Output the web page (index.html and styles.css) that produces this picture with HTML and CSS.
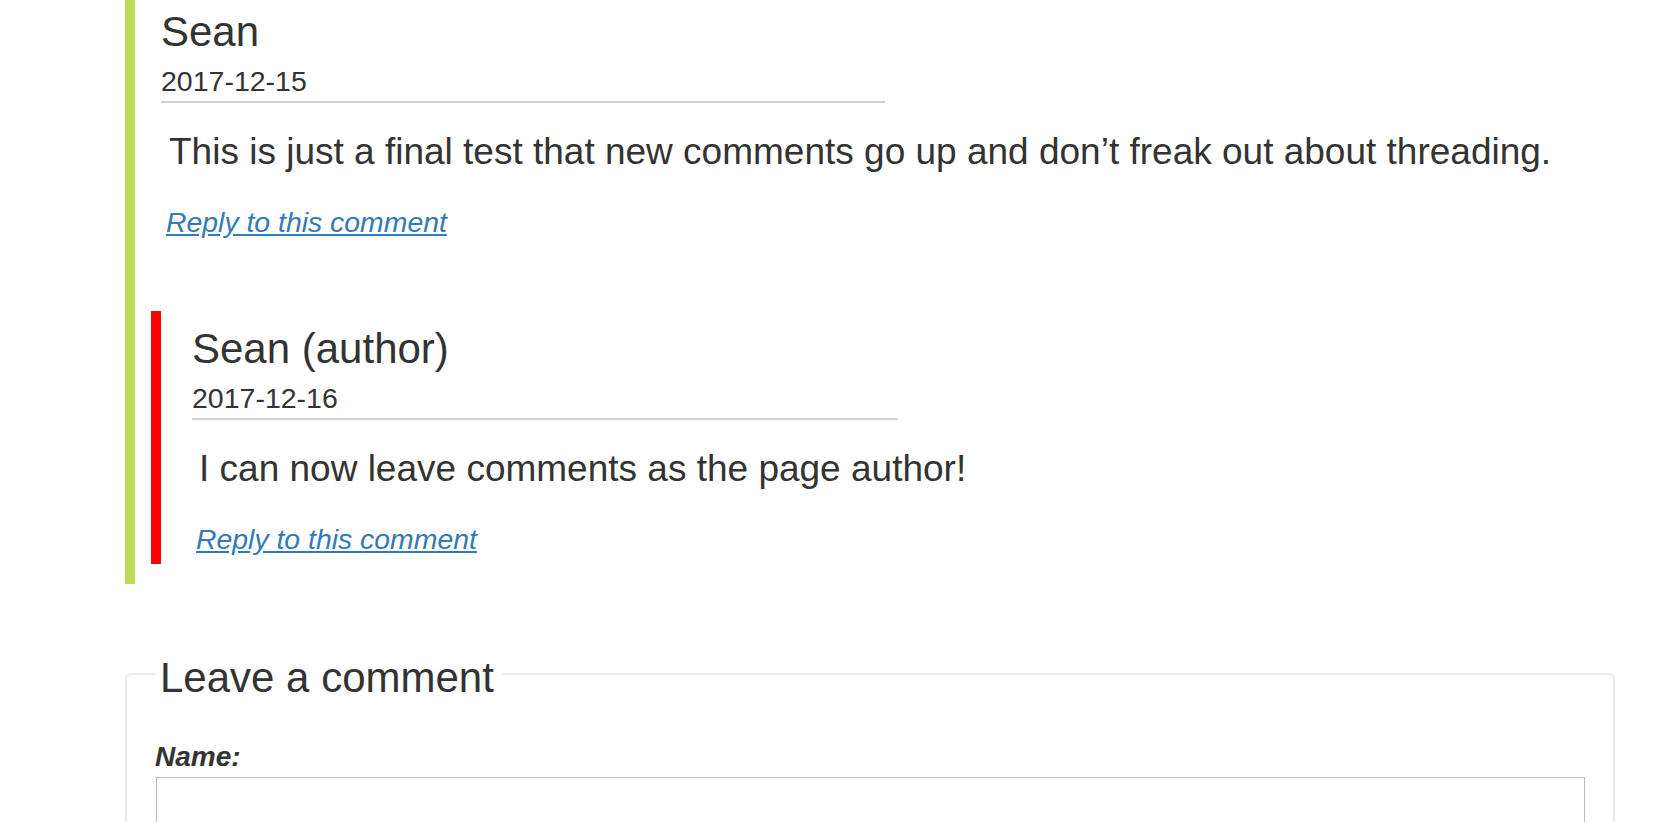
FILE: index.html
```html
<!DOCTYPE html>
<html lang="en">
<head>
<meta charset="utf-8">
<title>Comments</title>
<link rel="stylesheet" href="styles.css">
</head>
<body>
<div class="page">
  <div class="comment comment--root">
    <div class="comment-main">
      <div class="comment-head">
        <div class="comment-name">Sean</div>
        <div class="comment-date">2017-12-15</div>
      </div>
      <p class="comment-text">This is just a final test that new comments go up and don’t freak out about threading.</p>
      <a class="comment-reply" href="#">Reply to this comment</a>
    </div>
    <div class="replies">
      <div class="comment comment--author">
        <div class="comment-main">
          <div class="comment-head">
            <div class="comment-name">Sean (author)</div>
            <div class="comment-date">2017-12-16</div>
          </div>
          <p class="comment-text">I can now leave comments as the page author!</p>
          <a class="comment-reply" href="#">Reply to this comment</a>
        </div>
      </div>
    </div>
  </div>

  <form class="comment-form">
    <fieldset class="form-fieldset">
      <legend class="form-legend">Leave a comment</legend>
      <label class="form-label" for="name">Name:</label>
      <input class="form-input" id="name" type="text">
    </fieldset>
  </form>
</div>
</body>
</html>
```

FILE: styles.css
```css
html, body {
  margin: 0;
  padding: 0;
  background: #ffffff;
}

body {
  font-family: "Liberation Sans", Arial, Helvetica, sans-serif;
  color: #333333;
  overflow: hidden;
}

.page {
  padding-left: 125px;
  width: 1490px;
}

.comment {
  border-left: 10px solid #bfdc57;
  padding-left: 16px;
}

.comment--root {
  padding-top: 2px;
  padding-bottom: 20px;
}

.comment--author {
  border-left-color: #ff0000;
  padding-top: 8px;
  padding-bottom: 9px;
}

.comment-main {
  padding-left: 10px;
}

.comment--author .comment-main {
  padding-left: 15px;
}

.comment-head {
  width: 724px;
  border-bottom: 2px solid #d3d3d3;
}

.comment--author .comment-head {
  width: 706px;
}

.comment-name {
  font-size: 42px;
  line-height: 60px;
}

.comment-date {
  font-size: 28.5px;
  line-height: 39px;
}

.comment-text {
  margin: 27px 0 0 8px;
  font-size: 37px;
  line-height: 44px;
}

.comment--author .comment-text {
  margin-left: 7px;
}

.comment-reply {
  display: inline-block;
  margin: 32px 0 0 5px;
  font-size: 28.4px;
  line-height: 32px;
  font-style: italic;
  color: #337ab7;
  text-decoration: underline;
}

.comment--author .comment-reply {
  margin-left: 4px;
}

.replies {
  margin-top: 73px;
}

.comment-form {
  margin-top: 63px;
}

.form-fieldset {
  margin: 0;
  padding: 40px 28px 0 28px;
  border: 2px solid #e6ebf5;
  border-radius: 6px;
  min-width: 0;
}

.form-legend {
  font-size: 42px;
  line-height: 46px;
  padding: 8px 8px 0 5px;
}

.form-label {
  display: block;
  font-size: 28px;
  line-height: 32px;
  font-weight: bold;
  font-style: italic;
  margin-bottom: 4px;
}

.form-input {
  display: block;
  box-sizing: border-box;
  width: calc(100% - 1px);
  height: 60px;
  margin: 0 0 0 1px;
  border: 1px solid #bbbbbb;
  border-radius: 0;
  font-size: 26px;
  font-family: inherit;
  padding: 0 10px;
}
```
